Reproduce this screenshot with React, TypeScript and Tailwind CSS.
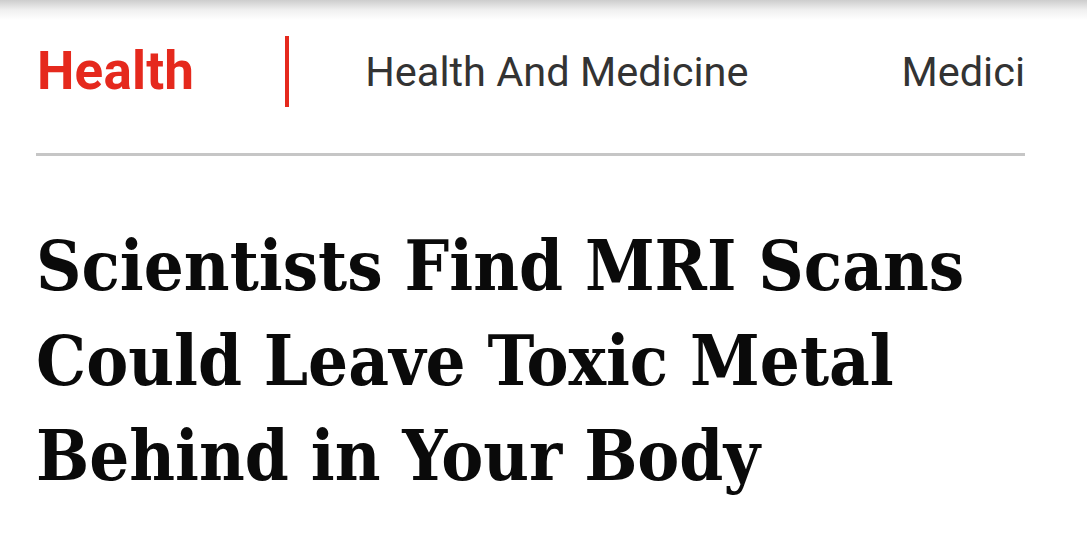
import React from "react";

export default function App() {
  return (
    <div className="w-[1087px] h-[546px] bg-white overflow-hidden">
      <div className="h-[20px] bg-gradient-to-b from-[#cdcdcd] via-[#f0f0f0] to-white" />
      <div className="ml-[36px] w-[989px]">
        <nav className="mt-[16px] h-[71px] flex items-center overflow-hidden whitespace-nowrap font-['Roboto',sans-serif]">
          <span className="pl-[1px] text-[53px] font-bold text-[#e5291d] leading-none tracking-[0.2px]">Health</span>
          <span className="ml-[91px] w-[4px] h-[71px] bg-[#e5291d] shrink-0" />
          <span className="ml-[76px] text-[41.5px] text-[#333333] leading-none">Health And Medicine</span>
          <span className="ml-[153px] text-[41.5px] text-[#333333] leading-none">Medicine</span>
        </nav>
        <div className="mt-[46px] h-[3px] bg-[#c6c6c6]" />
        <h1 className="mt-[62px] font-['DejaVu_Serif_Condensed','DejaVu_Serif',serif] font-bold text-[70px] leading-[95px] text-[#0a0a0a] whitespace-nowrap">
          Scientists Find MRI Scans
          <br />
          Could Leave Toxic Metal
          <br />
          Behind in Your Body
        </h1>
      </div>
    </div>
  );
}
